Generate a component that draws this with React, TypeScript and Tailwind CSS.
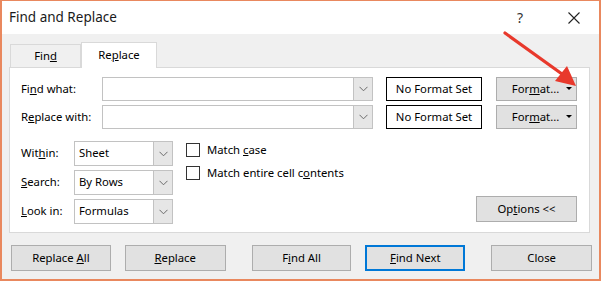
import React from "react";

const font = { fontFamily: '"Noto Sans", "Open Sans", sans-serif' };

function Chevron() {
  return (
    <svg width="9" height="6" viewBox="0 0 9 6" className="block">
      <path d="M0.5 0.8 L4.5 4.8 L8.5 0.8" fill="none" stroke="#6b6b6b" strokeWidth="1" />
    </svg>
  );
}

function Combo({ w, text }: { w: string; text?: string }) {
  return (
    <div className={`flex h-full border border-[#c2c2c2] bg-white ${w}`}>
      <div className="flex flex-1 items-center pl-[4px] text-[11.3px] text-black">{text}</div>
      <div className="flex w-[19px] items-center justify-center border-l border-[#c2c2c2] bg-[#e6e6e6]">
        <Chevron />
      </div>
    </div>
  );
}

function Btn({ children, w, cls = "" }: { children: React.ReactNode; w: string; cls?: string }) {
  return (
    <div
      className={`flex h-[26px] items-center justify-center border border-[#adadad] bg-[#e1e1e1] text-[11.3px] text-black ${w} ${cls}`}
    >
      {children}
    </div>
  );
}

function FormatBtn() {
  return (
    <Btn w="ml-[14px] w-[81px] !h-[24px] relative">
      <span className="-ml-[2px]">
        For<span className="underline">m</span>at...
      </span>
      <span className="absolute right-[4px] top-[9px] h-0 w-0 border-x-[3px] border-t-[3px] border-x-transparent border-t-black" />
    </Btn>
  );
}

export default function App() {
  return (
    <div
      className="relative flex h-[281px] w-[601px] flex-col overflow-hidden border-x-2 border-b-2 border-t border-[#e9885e] bg-[#f0f0f0] text-black"
      style={font}
    >
      {/* Title bar */}
      <div className="flex h-[33px] items-center bg-white pl-[7px]">
        <span className="text-[13.5px] text-[#1a1a1a]">Find and Replace</span>
        <span className="ml-auto mr-[45px] text-[14px] text-[#333]">?</span>
        <svg width="12" height="12" viewBox="0 0 12 12" className="mr-[19px]">
          <path d="M0.5 0.5 L11.5 11.5 M11.5 0.5 L0.5 11.5" stroke="#222" strokeWidth="1.1" />
        </svg>
      </div>

      {/* Body */}
      <div className="flex flex-1 flex-col px-[7px] pt-[8px]">
        {/* Tabs */}
        <div className="flex h-[25px] items-end pl-[1px]">
          <div className="flex h-[23px] w-[71px] items-center justify-center border border-b-0 border-[#d9d9d9] bg-[#f0f0f0] text-[11.3px]">
            Fin<span className="underline">d</span>
          </div>
          <div className="relative z-10 -mb-px flex h-[26px] w-[76px] items-center justify-center border border-b-0 border-[#d9d9d9] bg-white text-[11.3px]">
            Re<span className="underline">p</span>lace
          </div>
        </div>

        {/* Panel */}
        <div className="flex h-[166px] w-[581px] flex-col border border-[#d9d9d9] bg-white pl-[11px] pt-[9px]">
          {/* Row 1 */}
          <div className="flex h-[24px] items-center">
            <div className="w-[81px] text-[11.3px]">
              Fi<span className="underline">n</span>d what:
            </div>
            <Combo w="w-[271px]" />
            <div className="ml-[13px] flex h-[24px] w-[96px] items-center justify-center border border-black text-[11.3px]">
              No Format Set
            </div>
            <FormatBtn />
          </div>
          {/* Row 2 */}
          <div className="mt-[4px] flex h-[24px] items-center">
            <div className="w-[81px] text-[11.3px]">
              R<span className="underline">e</span>place with:
            </div>
            <Combo w="w-[271px]" />
            <div className="ml-[13px] flex h-[24px] w-[96px] items-center justify-center border border-black text-[11.3px]">
              No Format Set
            </div>
            <FormatBtn />
          </div>

          {/* Options area */}
          <div className="mt-[12px] flex">
            <div className="flex flex-col gap-[4px]">
              <div className="flex h-[25px] items-center">
                <div className="w-[53px] text-[11.3px]">
                  Wit<span className="underline">h</span>in:
                </div>
                <Combo w="w-[99px]" text="Sheet" />
              </div>
              <div className="flex h-[25px] items-center">
                <div className="w-[53px] text-[11.3px]">
                  <span className="underline">S</span>earch:
                </div>
                <Combo w="w-[99px]" text="By Rows" />
              </div>
              <div className="flex h-[25px] items-center">
                <div className="w-[53px] text-[11.3px]">
                  <span className="underline">L</span>ook in:
                </div>
                <Combo w="w-[99px]" text="Formulas" />
              </div>
            </div>
            <div className="ml-[13px] flex flex-col gap-[9px] pt-[2px]">
              <div className="flex items-center">
                <div className="h-[14px] w-[14px] border border-[#333]" />
                <span className="ml-[7px] text-[11.3px] leading-[14px]">
                  Match <span className="underline">c</span>ase
                </span>
              </div>
              <div className="flex items-center">
                <div className="h-[14px] w-[14px] border border-[#333]" />
                <span className="ml-[7px] text-[11.3px] leading-[14px]">
                  Match entire cell c<span className="underline">o</span>ntents
                </span>
              </div>
            </div>
            <div className="ml-auto mr-[12px] flex flex-col justify-end pb-[2px]">
              <Btn w="w-[101px]">
                Op<span className="underline">t</span>ions &lt;&lt;
              </Btn>
            </div>
          </div>
        </div>

        {/* Bottom buttons */}
        <div className="mt-[12px] flex pl-[2px]">
          <Btn w="w-[100px]">
            Replace <span className="ml-[3px] underline">A</span>ll
          </Btn>
          <Btn w="ml-[14px] w-[101px]">
            <span className="underline">R</span>eplace
          </Btn>
          <Btn w="ml-[26px] w-[100px]">
            F<span className="underline">i</span>nd All
          </Btn>
          <Btn w="ml-[14px] w-[100px]" cls="!border-2 !border-[#0078d7]">
            <span className="underline">F</span>ind Next
          </Btn>
          <Btn w="ml-[26px] w-[101px]">Close</Btn>
        </div>
      </div>

      {/* Red annotation arrow */}
      <svg className="pointer-events-none absolute left-0 top-0" width="601" height="281">
        <line x1="503" y1="32" x2="560" y2="73" stroke="#e8392c" strokeWidth="3.2" strokeLinecap="round" />
        <polygon points="574,85 553,80 565,65" fill="#e8392c" />
      </svg>
    </div>
  );
}
